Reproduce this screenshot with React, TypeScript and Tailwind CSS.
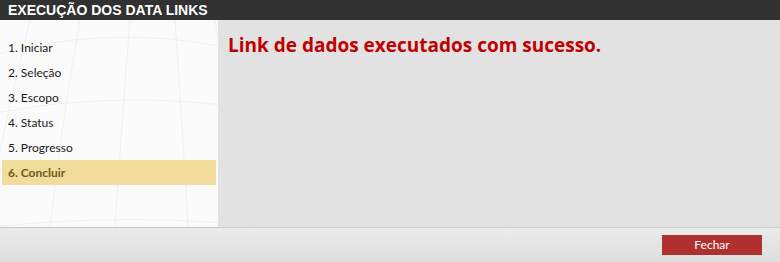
const steps = ['1. Iniciar', '2. Seleção', '3. Escopo', '4. Status', '5. Progresso', '6. Concluir'];

function GlobeGrid() {
  return (
    <svg className="absolute inset-0 h-full w-full" viewBox="0 0 218 206" preserveAspectRatio="none" aria-hidden>
      <g fill="none" stroke="#efefef" strokeWidth="1">
        <path d="M-40 45 Q110 -5 260 35" />
        <path d="M-40 100 Q110 65 260 90" />
        <path d="M-40 155 Q110 130 260 150" />
        <path d="M-40 210 Q110 190 260 205" />
        <path d="M30 0 Q5 100 -15 206" />
        <path d="M80 0 Q62 100 50 206" />
        <path d="M130 0 Q122 100 115 206" />
        <path d="M175 0 Q182 100 188 206" />
        <path d="M215 0 Q232 100 250 206" />
      </g>
    </svg>
  );
}

export default function App() {
  return (
    <div className="flex h-[262px] w-[780px] flex-col bg-[#e2e2e2]">
      <div className="flex h-[20px] items-center bg-[#313131] px-[8px]">
        <span className="text-[14px] font-bold uppercase leading-none text-white [font-family:'Liberation_Sans',Arial,sans-serif]">
          Execução dos Data Links
        </span>
      </div>
      <div className="flex flex-1">
        <div className="relative w-[218px] bg-[#fafafa]">
          <GlobeGrid />
          <ul className="relative flex flex-col pt-[15px]">
            {steps.map((s, i) => {
              const active = i === steps.length - 1;
              return (
                <li
                  key={s}
                  className={
                    active
                      ? 'ml-[2px] mr-[2px] flex h-[25px] items-center bg-[#f1dc9b] pl-[6px] text-[12px] font-bold text-[#6b5a1a] [font-family:Lato,sans-serif]'
                      : 'flex h-[25px] items-center pl-[8px] text-[12px] text-[#1a1a1a] [font-family:Lato,sans-serif]'
                  }
                >
                  {s}
                </li>
              );
            })}
          </ul>
        </div>
        <div className="flex-1 pl-[10px] pt-[12px]">
          <h1 className="text-[19px] font-bold leading-[26px] text-[#c00000] [font-family:'Open_Sans',sans-serif]">
            Link de dados executados com sucesso.
          </h1>
        </div>
      </div>
      <div className="flex h-[35px] items-center justify-end border-t border-[#c9c9c9] bg-gradient-to-b from-[#ebebeb] to-[#dedede] pr-[18px]">
        <button className="h-[20px] w-[100px] bg-[#b03030] text-[12px] text-white [font-family:Lato,sans-serif]">
          Fechar
        </button>
      </div>
    </div>
  );
}
